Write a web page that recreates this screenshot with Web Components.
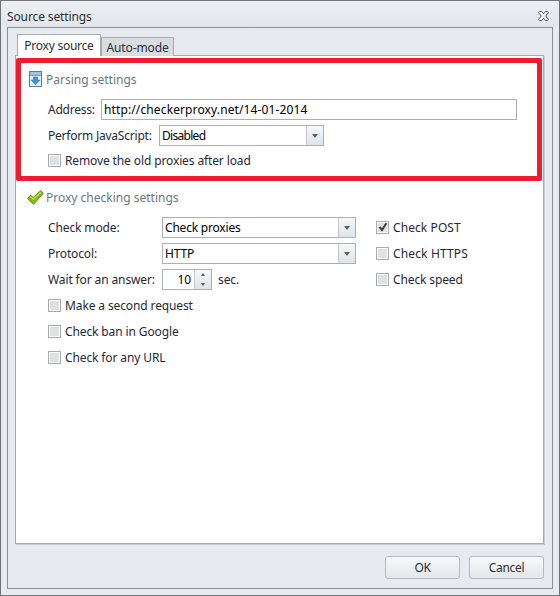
<!DOCTYPE html>
<html>
<head>
<meta charset="utf-8">
<title>Source settings</title>
<style>
html, body { margin: 0; padding: 0; }
body { font: 12px "Noto Sans", "DejaVu Sans", sans-serif; color: #1f2937; letter-spacing: -0.12px; }
</style>
</head>
<body>
<settings-window caption="Source settings">
  <tab-strip slot="tabs">
    <tab-item active style="letter-spacing:-.25px">Proxy source</tab-item>
    <tab-item>Auto-mode</tab-item>
  </tab-strip>

  <settings-section caption="Parsing settings" icon="parse">
    <div style="display:grid;grid-template-columns:53px 416px;align-items:center;height:21px;">
      <span style="letter-spacing:-.25px">Address:</span>
      <text-field value="http://checkerproxy.net/14-01-2014" style="letter-spacing:.12px"></text-field>
    </div>
    <div style="display:grid;grid-template-columns:111px 165px;align-items:center;height:21px;">
      <span style="letter-spacing:-.22px">Perform JavaScript:</span>
      <combo-box value="Disabled" style="letter-spacing:-.7px"></combo-box>
    </div>
    <check-box style="margin-top:-1px;margin-bottom:1px">Remove the old proxies after load</check-box>
    <highlight-box></highlight-box>
  </settings-section>

  <settings-section caption="Proxy checking settings" icon="check" second>
    <div style="display:grid;grid-template-columns:114px 194px 20px 1fr;grid-auto-rows:21px;row-gap:5px;align-items:center;">
      <span>Check mode:</span>
      <combo-box value="Check proxies" style="letter-spacing:-.2px"></combo-box>
      <span></span>
      <check-box checked style="letter-spacing:.08px">Check POST</check-box>

      <span>Protocol:</span>
      <combo-box value="HTTP"></combo-box>
      <span></span>
      <check-box style="letter-spacing:.14px">Check HTTPS</check-box>

      <span>Wait for an answer:</span>
      <div style="display:flex;align-items:center;gap:6px;">
        <spin-box value="10"></spin-box><span>sec.</span>
      </div>
      <span></span>
      <check-box>Check speed</check-box>

      <check-box style="grid-column:1 / 3">Make a second request</check-box>
      <check-box style="grid-column:1 / 3">Check ban in Google</check-box>
      <check-box style="grid-column:1 / 3">Check for any URL</check-box>
    </div>
  </settings-section>

  <push-button slot="footer">OK</push-button>
  <push-button slot="footer">Cancel</push-button>
</settings-window>

<script>
class SettingsWindow extends HTMLElement {
  constructor() {
    super();
    this.attachShadow({ mode: "open" }).innerHTML = `
<style>
:host { display: flex; flex-direction: column; box-sizing: border-box; width: 560px; height: 596px;
  border: 1px solid #6d7378; background: #e7eaee; }
.title { height: 26px; flex: none; display: flex; align-items: center; justify-content: space-between;
  padding: 4px 6px 0 6px; box-sizing: border-box; color: #2a3038; background: linear-gradient(#edeff2, #e2e6ea); }
.title svg { display: block; margin-right: 3px; }
.panel { flex: 1; margin: 0 6px 6px 6px; border: 1px solid #8b9095; display: flex; flex-direction: column;
  padding: 6px 8px 0 7px; min-height: 0; }
.pane { flex: 1; background: #fff; border: 1px solid #a7abb0; position: relative; margin-top: -1px; padding-top: 15px; box-shadow: 1px 1px 0 #c9ccd0; }
.foot { flex: none; height: 44px; padding-top: 12px; box-sizing: border-box; display: flex; justify-content: flex-end; gap: 9px; }
</style>
<div class="title"><span></span>
  <svg width="13" height="12" viewBox="0 0 13 12"><path d="M2.5 1.5 L4.5 1.5 L6.5 3.7 L8.5 1.5 L10.5 1.5 L11.5 2.5 L8.7 6 L11.5 9.500 L10.5 10.5 L8.5 10.5 L6.5 8.3 L4.5 10.5 L2.5 10.5 L1.5 9.500 L4.3 6 L1.5 2.5 Z" fill="#f4f5f6" stroke="#4e5358"/></svg>
</div>
<div class="panel">
  <slot name="tabs"></slot>
  <div class="pane"><slot></slot></div>
  <div class="foot"><slot name="footer"></slot></div>
</div>`;
    this.shadowRoot.querySelector(".title span").textContent = this.getAttribute("caption");
  }
}

class TabStrip extends HTMLElement {
  constructor() {
    super();
    this.attachShadow({ mode: "open" }).innerHTML = `
<style>:host { display: flex; align-items: flex-end; height: 22px; padding-left: 2px; position: relative; z-index: 1; }</style>
<slot></slot>`;
  }
}

class TabItem extends HTMLElement {
  constructor() {
    super();
    this.attachShadow({ mode: "open" }).innerHTML = `
<style>
:host { display: flex; align-items: center; justify-content: center; box-sizing: border-box; height: 19px; width: 73px;
  background: #d9dce0; border: 1px solid #a7abb0; border-bottom: 0; margin-left: 0; color: #2a3038; }
:host([active]) { height: 22px; width: 84px; background: #fff; }
</style>
<slot></slot>`;
  }
}

const ICONS = {
  parse: `<svg width="13" height="16" viewBox="0 0 13 16"><rect x=".5" y=".5" width="12" height="15" fill="#e6f0f8" stroke="#5a7a9c"/><rect x="1" y="1" width="11" height="3" fill="#9cc4e6"/><path d="M1 4.500h11" stroke="#7c9cbc"/><path d="M4.500 6h4v3h2.500L6.500 13.800 2 9h2.500z" fill="#3f93dc" stroke="#2c6fae" stroke-width=".5"/></svg>`,
  check: `<svg width="17" height="15" viewBox="0 0 17 15"><path d="M.7 8.500 3.700 5.200 6.300 7.500 13.500.7 16.300 3.300 6.500 14.300Z" fill="#86bd14" stroke="#5f8f12" stroke-linejoin="round"/><path d="M3.500 6.700 6.300 9.300 13.800 2.300" fill="none" stroke="#bfe65a" stroke-width="1.200"/></svg>`
};

class SettingsSection extends HTMLElement {
  constructor() {
    super();
    this.attachShadow({ mode: "open" }).innerHTML = `
<style>
:host { display: block; position: relative; }
:host([second]) { margin-top: 17px; }
.head { display: flex; align-items: center; height: 16px; padding-left: 13px; gap: 4px; color: #6c7682; letter-spacing: 0; }
:host([second]) .head { padding-left: 11px; gap: 2px; }
.rows { display: flex; flex-direction: column; gap: 5px; margin: 12px 0 0 32px; }
</style>
<div class="head"><span class="icon"></span><span class="text"></span></div>
<div class="rows"><slot></slot></div>`;
    this.shadowRoot.querySelector(".icon").innerHTML = ICONS[this.getAttribute("icon")];
    this.shadowRoot.querySelector(".icon").style.cssText = "display:block;line-height:0";
    this.shadowRoot.querySelector(".text").textContent = this.getAttribute("caption");
  }
}

// red annotation drawn over the first section
class HighlightBox extends HTMLElement {
  constructor() {
    super();
    this.attachShadow({ mode: "open" }).innerHTML = `
<style>:host { display: block; position: absolute; left: 0; top: -13px; width: 526px; height: 123px; box-sizing: border-box;
  border: 5px solid #ed1c2e; border-radius: 2px; pointer-events: none; }</style>`;
  }
}

class TextField extends HTMLElement {
  constructor() {
    super();
    this.attachShadow({ mode: "open" }).innerHTML = `
<style>
:host { display: flex; align-items: center; box-sizing: border-box; height: 21px; border: 1px solid #abb0b8; padding-left: 2px; color: #000; background: #fff; white-space: nowrap; }
</style><span></span>`;
    this.shadowRoot.querySelector("span").textContent = this.getAttribute("value");
  }
}

class ComboBox extends HTMLElement {
  constructor() {
    super();
    this.attachShadow({ mode: "open" }).innerHTML = `
<style>
:host { display: flex; box-sizing: border-box; height: 21px; border: 1px solid #abb0b8; color: #000; background: #fff; }
span { flex: 1; padding-left: 2px; line-height: 19px; white-space: nowrap; }
.btn { width: 16px; border-left: 1px solid #c4c8ce; background: linear-gradient(#f6f8fa, #dfe4e9); display: flex; align-items: center; justify-content: center; }
.btn i { display: block; border: 3.5px solid transparent; border-top: 4px solid #5a6068; border-bottom: 0; }
</style><span></span><div class="btn"><i></i></div>`;
    this.shadowRoot.querySelector("span").textContent = this.getAttribute("value");
  }
}

class SpinBox extends HTMLElement {
  constructor() {
    super();
    this.attachShadow({ mode: "open" }).innerHTML = `
<style>
:host { display: flex; box-sizing: border-box; width: 50px; height: 21px; border: 1px solid #abb0b8; color: #000; background: #fff; }
span { flex: 1; text-align: right; padding-right: 3px; line-height: 19px; }
.btn { width: 16px; border-left: 1px solid #c4c8ce; display: flex; flex-direction: column; background: linear-gradient(#f6f8fa, #dfe4e9); }
.btn div { flex: 1; display: flex; align-items: center; justify-content: center; }
.up i { display: block; border: 2.500px solid transparent; border-bottom: 3px solid #5a6068; border-top: 0; }
.down i { display: block; border: 2.500px solid transparent; border-top: 3px solid #5a6068; border-bottom: 0; }
</style><span></span><div class="btn"><div class="up"><i></i></div><div class="down"><i></i></div></div>`;
    this.shadowRoot.querySelector("span").textContent = this.getAttribute("value");
  }
}

class CheckBox extends HTMLElement {
  constructor() {
    super();
    this.attachShadow({ mode: "open" }).innerHTML = `
<style>
:host { display: flex; align-items: center; gap: 4px; height: 21px; white-space: nowrap; }
.box { position: relative; box-sizing: border-box; width: 13px; height: 13px; border: 1px solid #a5abb5; background: #e0e1e3; box-shadow: inset 0 0 0 1px #fff; }
svg { position: absolute; left: 1px; top: 0; display: none; }
:host([checked]) svg { display: block; }
</style>
<div class="box"><svg width="10" height="10" viewBox="0 0 10 10"><path d="M1.500 5 4 8 8.500 1" fill="none" stroke="#3c4046" stroke-width="2"/></svg></div><slot></slot>`;
  }
}

class PushButton extends HTMLElement {
  constructor() {
    super();
    this.attachShadow({ mode: "open" }).innerHTML = `
<style>
:host { display: flex; align-items: center; justify-content: center; box-sizing: border-box; width: 75px; height: 23px;
  border: 1px solid #b6babf; border-radius: 3px; background: linear-gradient(#f8f9fb, #e3e7eb); color: #2a3038; letter-spacing: -.3px; }
</style><slot></slot>`;
  }
}

customElements.define("settings-window", SettingsWindow);
customElements.define("tab-strip", TabStrip);
customElements.define("tab-item", TabItem);
customElements.define("settings-section", SettingsSection);
customElements.define("highlight-box", HighlightBox);
customElements.define("text-field", TextField);
customElements.define("combo-box", ComboBox);
customElements.define("spin-box", SpinBox);
customElements.define("check-box", CheckBox);
customElements.define("push-button", PushButton);
</script>
</body>
</html>
